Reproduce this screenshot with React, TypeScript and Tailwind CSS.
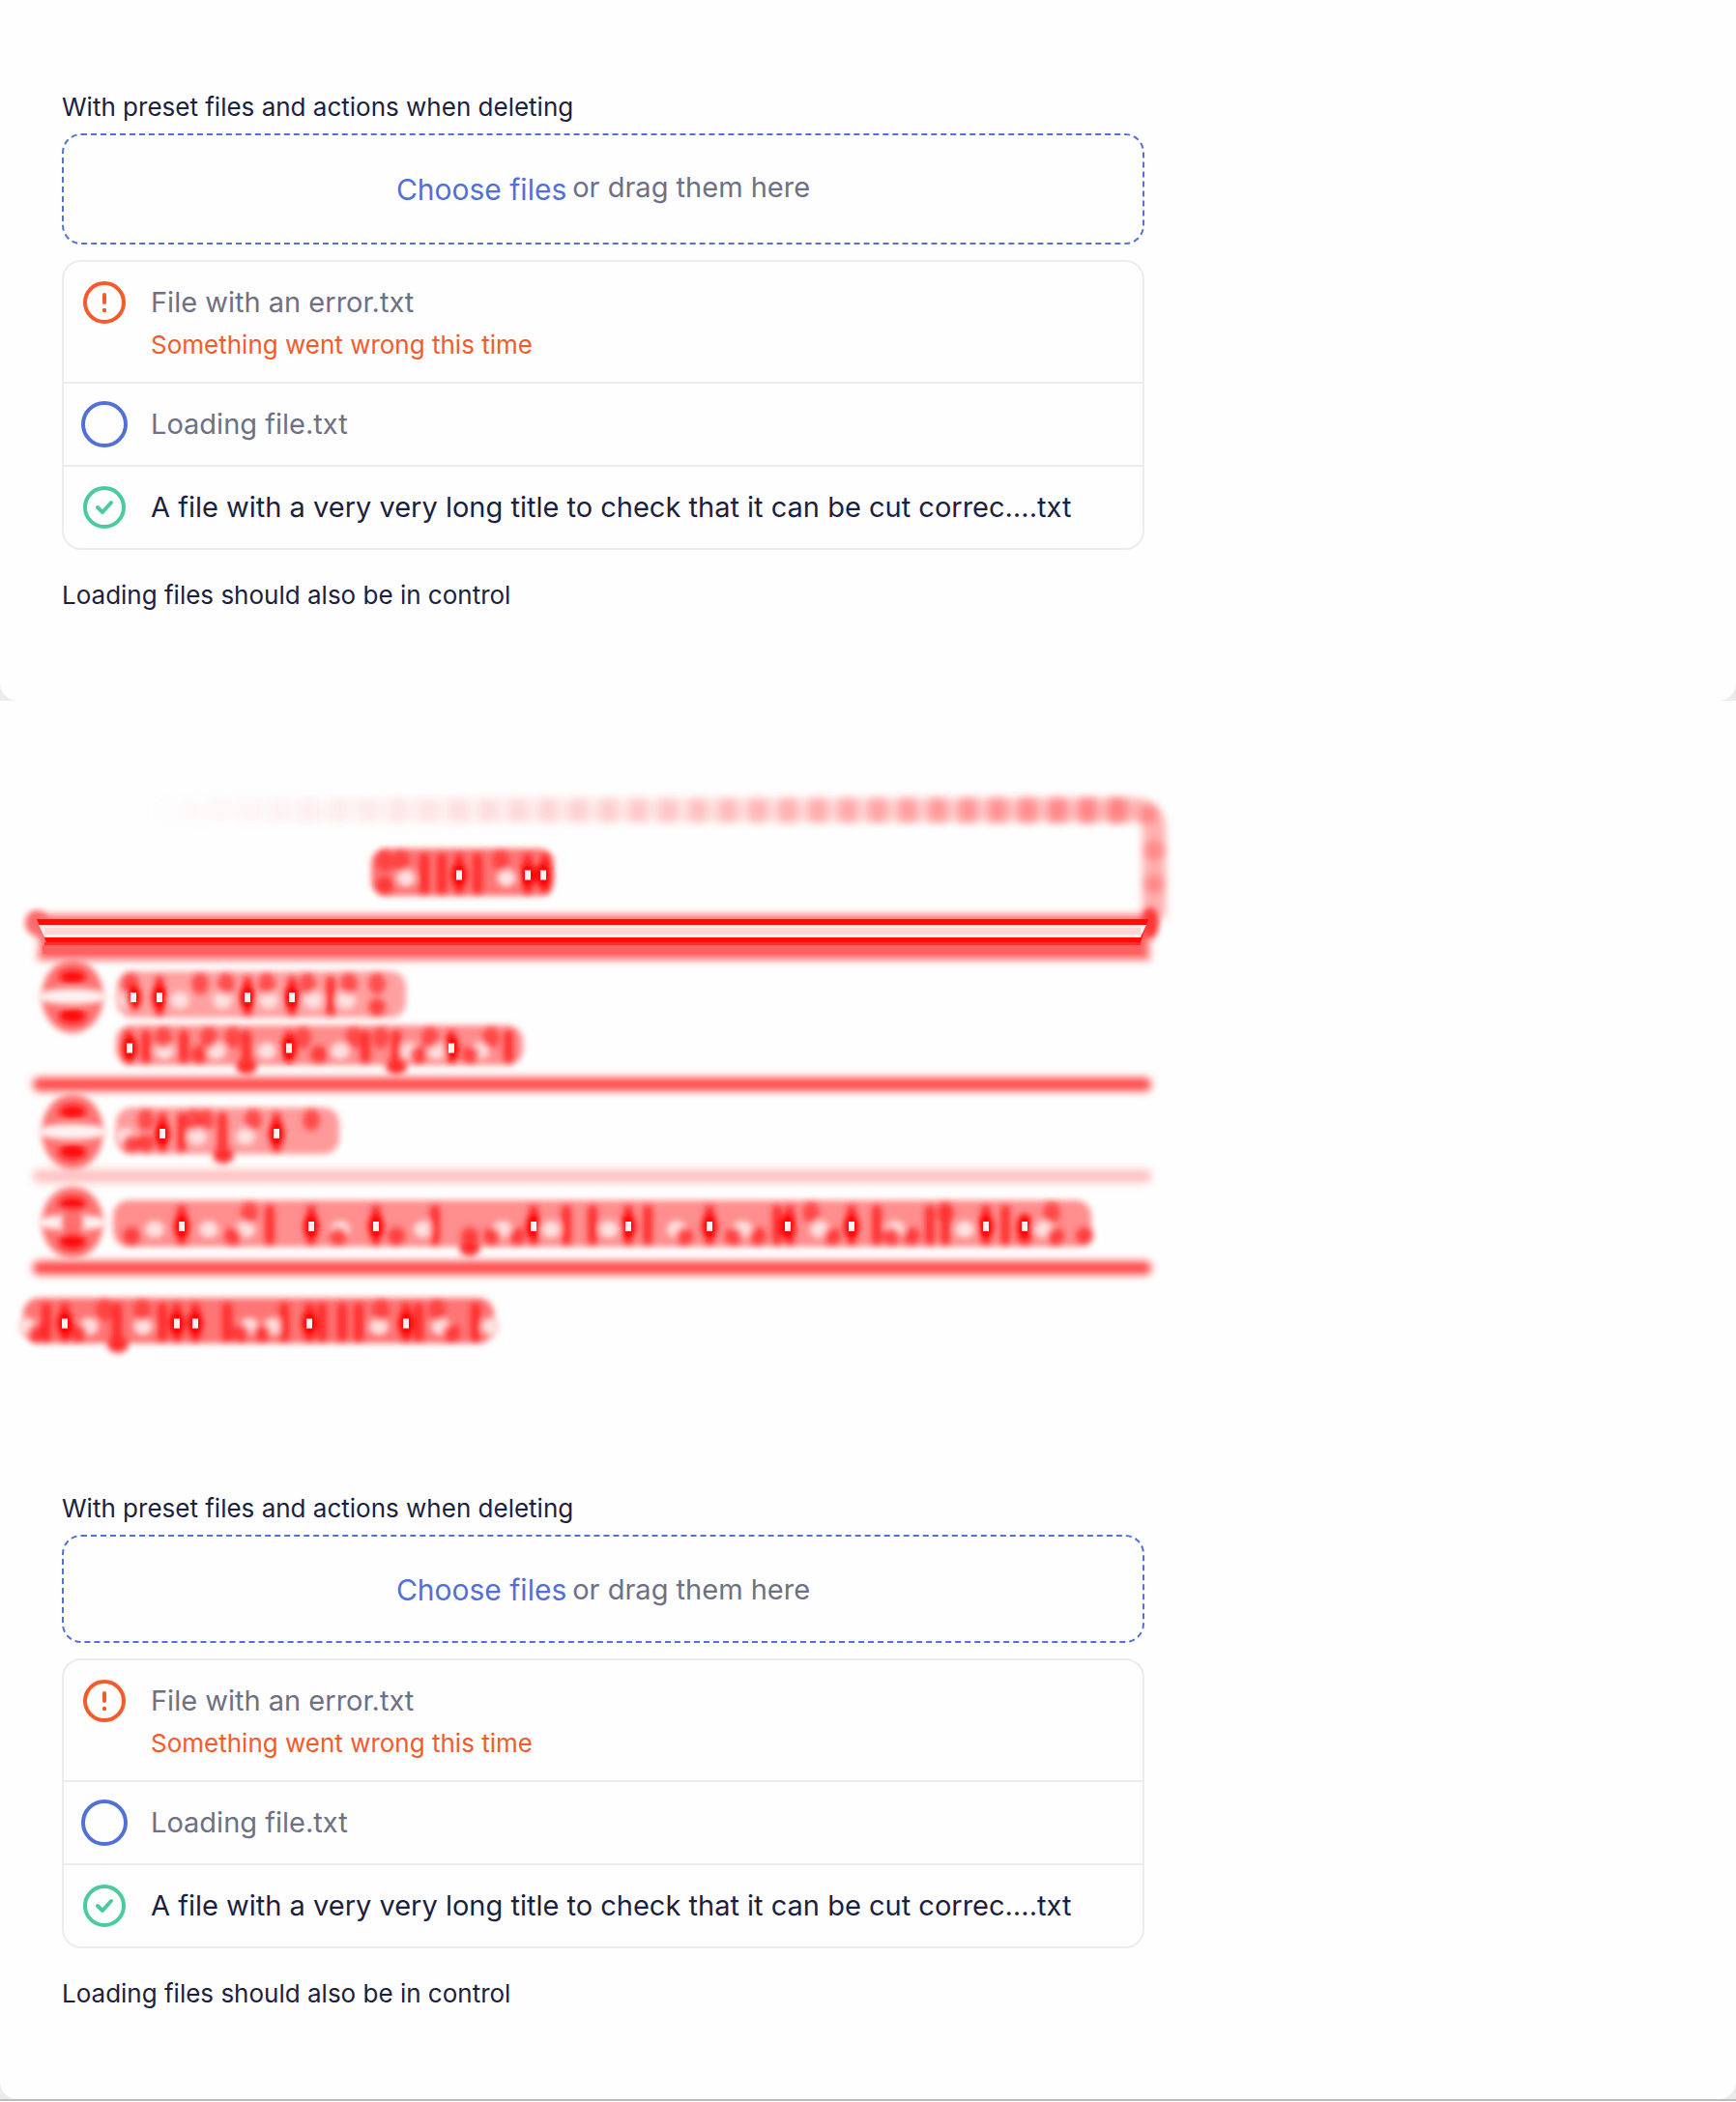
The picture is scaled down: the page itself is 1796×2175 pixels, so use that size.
type Status = "error" | "loading" | "done";
type FileItem = { status: Status; name: string; error?: string };

const FILES: FileItem[] = [
  { status: "error", name: "File with an error.txt", error: "Something went wrong this time" },
  { status: "loading", name: "Loading file.txt" },
  { status: "done", name: "A file with a very very long title to check that it can be cut correc….txt" },
];

function StatusIcon({ status }: { status: Status }) {
  if (status === "loading") {
    return (
      <svg viewBox="0 0 48 48" className="size-12 shrink-0 text-[#5270d7]" fill="none" stroke="currentColor" strokeWidth="4" aria-hidden="true">
        <circle cx="24" cy="24" r="22" />
      </svg>
    );
  }
  if (status === "error") {
    return (
      <svg viewBox="0 0 48 48" className="size-12 shrink-0 text-[#f65a2a]" fill="none" stroke="currentColor" strokeWidth="4" aria-hidden="true">
        <circle cx="24" cy="24" r="20" />
        <path d="M24 16v8" strokeLinecap="round" />
        <circle cx="24" cy="32" r="2.2" fill="currentColor" stroke="none" />
      </svg>
    );
  }
  return (
    <svg viewBox="0 0 48 48" className="size-12 shrink-0 text-[#4bcb9a]" fill="none" stroke="currentColor" strokeWidth="4" aria-hidden="true">
      <circle cx="24" cy="24" r="20" />
      <path d="M17 24l5 5 9-10" strokeLinecap="round" strokeLinejoin="round" />
    </svg>
  );
}

function FileRow({ file }: { file: FileItem }) {
  return (
    <li className="flex items-start gap-6 px-[18px] py-[18px]">
      <StatusIcon status={file.status} />
      <div className="min-w-0">
        <p className={`truncate text-[29px] leading-[48px] ${file.status === "done" ? "text-[#1c1f3f]" : "text-[#6e7085]"}`}>
          {file.name}
        </p>
        {file.error && <p className="text-[26px] leading-[40px] text-[#f65a2a]">{file.error}</p>}
      </div>
    </li>
  );
}

function UploadPanel({ shifted = false, className = "" }: { shifted?: boolean; className?: string }) {
  return (
    <div className={`bg-[#ebebeb] ${className}`}>
      <section className="rounded-b-[18px] bg-[#fefefe] px-16 pt-[93px] pb-[91px] text-[#1c1f3f]">
        <div className="w-full max-w-[1120px]">
          <p className="mb-[9px] text-[26px] leading-[36px]">With preset files and actions when deleting</p>
          <div className="mb-4 flex items-start justify-center gap-1.5 rounded-[20px] border-2 border-dashed border-[#5270d7] pt-[33px] pb-[31px]">
            <button type="button" className={`text-[30px] text-[#5270d7] ${shifted ? "leading-[47px]" : "leading-[44px]"}`}>
              Choose files
            </button>
            <span className={`text-[29px] text-[#6e7085] ${shifted ? "leading-[42px]" : "leading-[44px]"}`}>or drag them here</span>
          </div>
          <ul className="divide-y-2 divide-[#ececec] rounded-[20px] border-2 border-[#ececec]">
            {FILES.map((f) => (
              <FileRow key={f.name} file={f} />
            ))}
          </ul>
          <p className="mt-[29px] text-[26px] leading-[36px]">Loading files should also be in control</p>
        </div>
      </section>
    </div>
  );
}

type Run = {
  x1: number;
  x2: number;
  y1: number;
  y2: number;
  base: string;
  hot: number[];
  low: number[];
  high: number[];
  pale: number[];
  peak: number[];
  tails: number[];
};

const RUNS: Run[] = [
  {
    x1: 384, x2: 573, y1: 153, y2: 202, base: "#ff7474",
    hot: [439, 457, 475, 494, 546, 564], low: [398], high: [398, 415, 518], pale: [420, 524], peak: [475, 546, 562], tails: [],
  },
  {
    x1: 121, x2: 420, y1: 280, y2: 328, base: "#ffa0a0",
    hot: [165, 256, 302, 342], low: [390], high: [135, 207, 234, 276, 318, 361, 390], pale: [132, 186, 230, 278, 324, 358], peak: [138, 165, 256, 302], tails: [],
  },
  {
    x1: 120, x2: 541, y1: 336, y2: 377, base: "#ff8c8c",
    hot: [133, 151, 190, 255, 299, 378, 410, 467, 526], low: [206, 330, 433, 487], high: [169, 216, 241, 313, 366, 394, 445, 508], pale: [170, 224, 276, 352, 424, 452, 496], peak: [134, 299, 467], tails: [255, 410],
  },
  {
    x1: 120, x2: 351, y1: 421, y2: 469, base: "#ff9a9a",
    hot: [168, 188, 230, 286], low: [136, 151], high: [151, 200, 213, 262, 322], pale: [130, 204, 254], peak: [168, 286], tails: [231],
  },
  {
    x1: 117, x2: 1129, y1: 517, y2: 565, base: "#ff8e8e",
    hot: [188, 279, 322, 389, 450, 552, 586, 613, 650, 670, 734, 804, 817, 881, 907, 962, 978, 1020, 1040],
    low: [136, 241, 350, 410, 486, 509, 535, 708, 759, 784, 861, 922, 943, 1060, 1092, 1122], high: [258, 839, 978, 1088],
    pale: [160, 216, 254, 352, 438, 520, 570, 630, 700, 768, 848, 926, 998, 1080], peak: [188, 322, 389, 552, 650, 734, 815, 881, 1020, 1060], tails: [486],
  },
  {
    x1: 24, x2: 511, y1: 618, y2: 665, base: "#ff7474",
    hot: [48, 67, 121, 168, 183, 202, 235, 294, 320, 333, 354, 371, 420, 433, 492], low: [38, 81, 249, 271, 467], high: [108, 147, 394, 452],
    pale: [28, 92, 148, 258, 282, 392, 456, 508], peak: [67, 183, 202, 320, 420], tails: [122],
  },
];

const HEAT_LINES = [
  { y: 397, color: "#ff4a4a", opacity: 1 },
  { y: 492, color: "#ff9a9a", opacity: 0.6 },
  { y: 587, color: "#ff4a4a", opacity: 1 },
];

const DOTS = Array.from({ length: 33 }, (_, i) => ({ x: 1156 - i * 31, opacity: 0.7 * Math.pow(1 - i / 33, 1.7) }));

function HeatRun({ run }: { run: Run }) {
  const mid = (run.y1 + run.y2) / 2;
  return (
    <g>
      <g filter="url(#soft)">
        <rect x={run.x1} y={run.y1} width={run.x2 - run.x1} height={run.y2 - run.y1} rx="16" fill={run.base} />
        {run.tails.map((x) => (
          <ellipse key={x} cx={x} cy={run.y2 + 1} rx="11" ry="9" fill="#ff3030" />
        ))}
      </g>
      <g filter="url(#soft)">
        {run.pale.map((x) => (
          <ellipse key={x} cx={x} cy={mid + 6} rx="10" ry="9" fill="#ffe0e0" />
        ))}
        {run.hot.map((x) => (
          <rect key={x} x={x - 5} y={run.y1 + 5} width="10" height={run.y2 - run.y1 - 7} rx="5" fill="#ff2020" opacity="0.85" />
        ))}
        {run.high.map((x) => (
          <ellipse key={x} cx={x} cy={run.y1 + 13} rx="9" ry="11" fill="#ff3030" opacity="0.75" />
        ))}
        {run.low.map((x) => (
          <ellipse key={x} cx={x} cy={run.y2 - 11} rx="9" ry="9" fill="#ff2020" opacity="0.75" />
        ))}
        {run.peak.map((x) => (
          <ellipse key={x} cx={x} cy={mid + 3} rx="8" ry="13" fill="#ff0000" />
        ))}
      </g>
      {run.peak.map((x) => (
        <rect key={x} x={x - 3} y={mid - 2} width="6" height="10" fill="#fff0f0" />
      ))}
    </g>
  );
}

function HeatCircle({ cy, ry, solid }: { cy: number; ry: number; solid?: boolean }) {
  return (
    <g>
      <ellipse cx="75" cy={cy} rx="32" ry={ry} fill="#ff7272" filter="url(#soft)" />
      <g filter="url(#soft)">
        <ellipse cx="75" cy={cy} rx="38" ry="8" fill="#fff2f2" />
        {solid && <ellipse cx="75" cy={cy} rx="12" ry="15" fill="#ff7070" />}
        <ellipse cx="75" cy={cy - ry * 0.53} rx="14" ry="7" fill="#ff1010" />
        <ellipse cx="75" cy={cy + ry * 0.53} rx="14" ry="8" fill="#ff1010" />
      </g>
    </g>
  );
}

function HeatMap() {
  return (
    <svg viewBox="0 0 1796 725" className="block w-full" role="img" aria-label="Changed areas">
      <defs>
        <filter id="soft" x="-20%" y="-60%" width="140%" height="220%">
          <feGaussianBlur stdDeviation="3" />
        </filter>
        <filter id="line" filterUnits="userSpaceOnUse" x="0" y="60" width="1240" height="600">
          <feGaussianBlur stdDeviation="4" />
        </filter>
        <linearGradient id="fade" gradientUnits="userSpaceOnUse" x1="150" y1="0" x2="1190" y2="0">
          <stop offset="0" stopColor="#ffc0c0" stopOpacity="0" />
          <stop offset="0.5" stopColor="#ffc0c0" stopOpacity="0.4" />
          <stop offset="1" stopColor="#ffb0b0" />
        </linearGradient>
      </defs>

      <path d="M150 113.5L1174 113Q1194 113 1194 135V225" fill="none" stroke="url(#fade)" strokeWidth="24" filter="url(#line)" />
      <g filter="url(#line)">
        {DOTS.map((d) => (
          <rect key={d.x} x={d.x - 9} y="101" width="18" height="25" fill="#ff6c6c" opacity={d.opacity} />
        ))}
        <ellipse cx="1188" cy="118" rx="9" ry="9" fill="#ff8686" />
        <ellipse cx="1194" cy="155" rx="9" ry="10" fill="#ff8686" />
        <ellipse cx="1194" cy="190" rx="9" ry="10" fill="#ff8686" />
      </g>

      <path d="M34 222H1194L1188 254L1190 268H38L42 254Z" fill="#ff6060" filter="url(#line)" />
      <ellipse cx="38" cy="230" rx="12" ry="13" fill="#ff6a6a" filter="url(#soft)" />
      <ellipse cx="1190" cy="230" rx="9" ry="16" fill="#ff3838" filter="url(#soft)" />
      <path d="M38 226H1188L1180 250H48Z" fill="#ff0c0c" />
      <path d="M40 232H1186L1180 245H46Z" fill="#fff0f0" />
      <rect x="46" y="235" width="1134" height="7" fill="#ffd6d6" />
      <rect x="46" y="250" width="1134" height="3" fill="#ff2c2c" />
      <rect x="44" y="253" width="1136" height="9" fill="#ff6060" />

      {HEAT_LINES.map((l) => (
        <rect key={l.y} x="34" y={l.y - 7} width="1157" height="14" rx="6" fill={l.color} opacity={l.opacity} filter="url(#line)" />
      ))}

      <HeatCircle cy={306} ry={38} />
      <HeatCircle cy={446} ry={39} />
      <HeatCircle cy={540} ry={37} solid />

      {RUNS.map((r) => (
        <HeatRun key={r.y1} run={r} />
      ))}
    </svg>
  );
}

export default function App() {
  return (
    <main className="bg-[#fefefe] font-[Inter,sans-serif]">
      <UploadPanel shifted />
      <HeatMap />
      <UploadPanel className="border-b-2 border-[#bcbcbc]" />
    </main>
  );
}
